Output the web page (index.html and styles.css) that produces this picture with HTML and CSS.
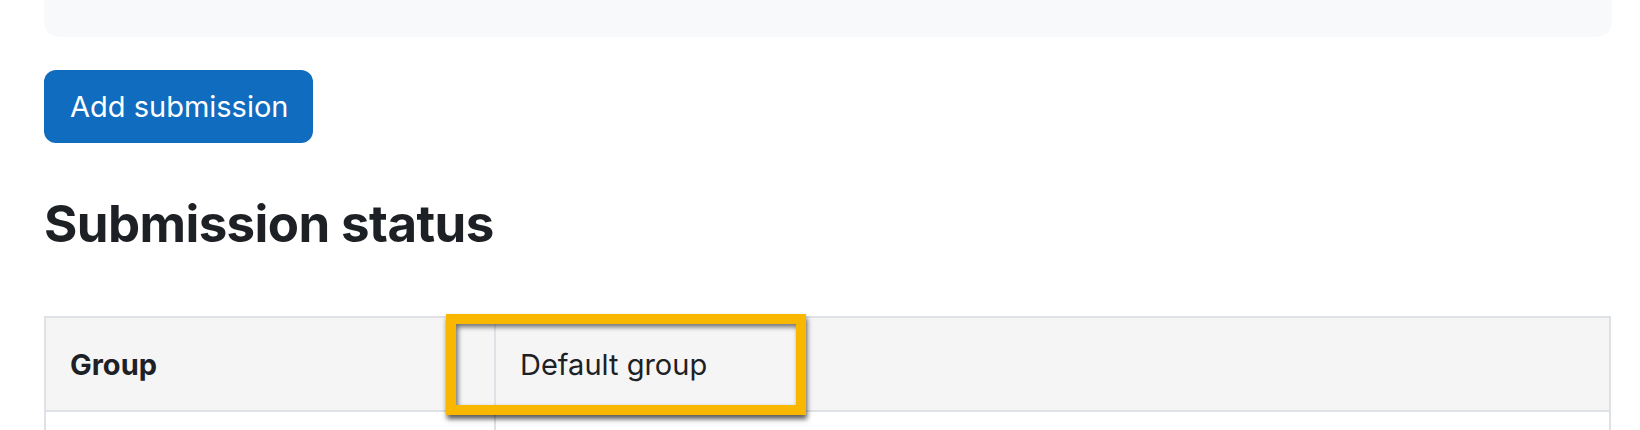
FILE: index.html
```html
<!DOCTYPE html>
<html lang="en">
<head>
<meta charset="utf-8">
<title>Submission status</title>
<link rel="stylesheet" href="styles.css">
</head>
<body>
<div class="page">
  <div class="panel"></div>
  <div class="actions">
    <button class="btn-primary" type="button">Add submission</button>
  </div>
  <h3 class="heading">Submission status</h3>
  <div class="table-wrap">
    <table class="status-table">
      <tbody>
        <tr class="row-shaded">
          <th class="cell cell-label">Group</th>
          <td class="cell">Default group</td>
        </tr>
        <tr>
          <th class="cell cell-label">&nbsp;</th>
          <td class="cell">&nbsp;</td>
        </tr>
      </tbody>
    </table>
    <div class="highlight"></div>
  </div>
</div>
</body>
</html>
```
FILE: styles.css
```css
html, body {
  margin: 0;
  padding: 0;
  background: #ffffff;
  overflow: hidden;
}
body {
  font-family: Inter, "Noto Sans", "Liberation Sans", sans-serif;
  color: #1d2125;
}
.page {
  padding: 0 28px 0 44px;
}
.panel {
  height: 100px;
  margin-top: -63px;
  background: #f8f9fa;
  border-radius: 15px;
}
.actions {
  margin-top: 33px;
}
.btn-primary {
  font-family: inherit;
  font-size: 29px;
  line-height: 43px;
  padding: 15px 25px 15px 26px;
  color: #ffffff;
  background: #0f6cbf;
  border: none;
  border-radius: 12px;
  cursor: pointer;
}
.heading {
  margin: 50px 0 0 0;
  font-size: 51px;
  line-height: 61px;
  font-weight: 700;
  letter-spacing: -0.6px;
}
.table-wrap {
  position: relative;
  margin-top: 62px;
}
.status-table {
  width: 1567px;
  border-collapse: collapse;
  font-size: 29px;
  line-height: 42px;
}
.cell {
  border: 2px solid #dee2e6;
  padding: 26px 24px 24px 24px;
  text-align: left;
  vertical-align: top;
}
.cell-label {
  width: 400px;
  font-weight: 700;
}
.row-shaded .cell {
  background: #f5f5f5;
}
.highlight {
  position: absolute;
  left: 402px;
  top: -2px;
  width: 340px;
  height: 81px;
  border: 10px solid #f9b700;
  box-shadow: 1px 4px 5px rgba(0, 0, 0, 0.65), inset 2px 3px 5px rgba(0, 0, 0, 0.55);
}
```
